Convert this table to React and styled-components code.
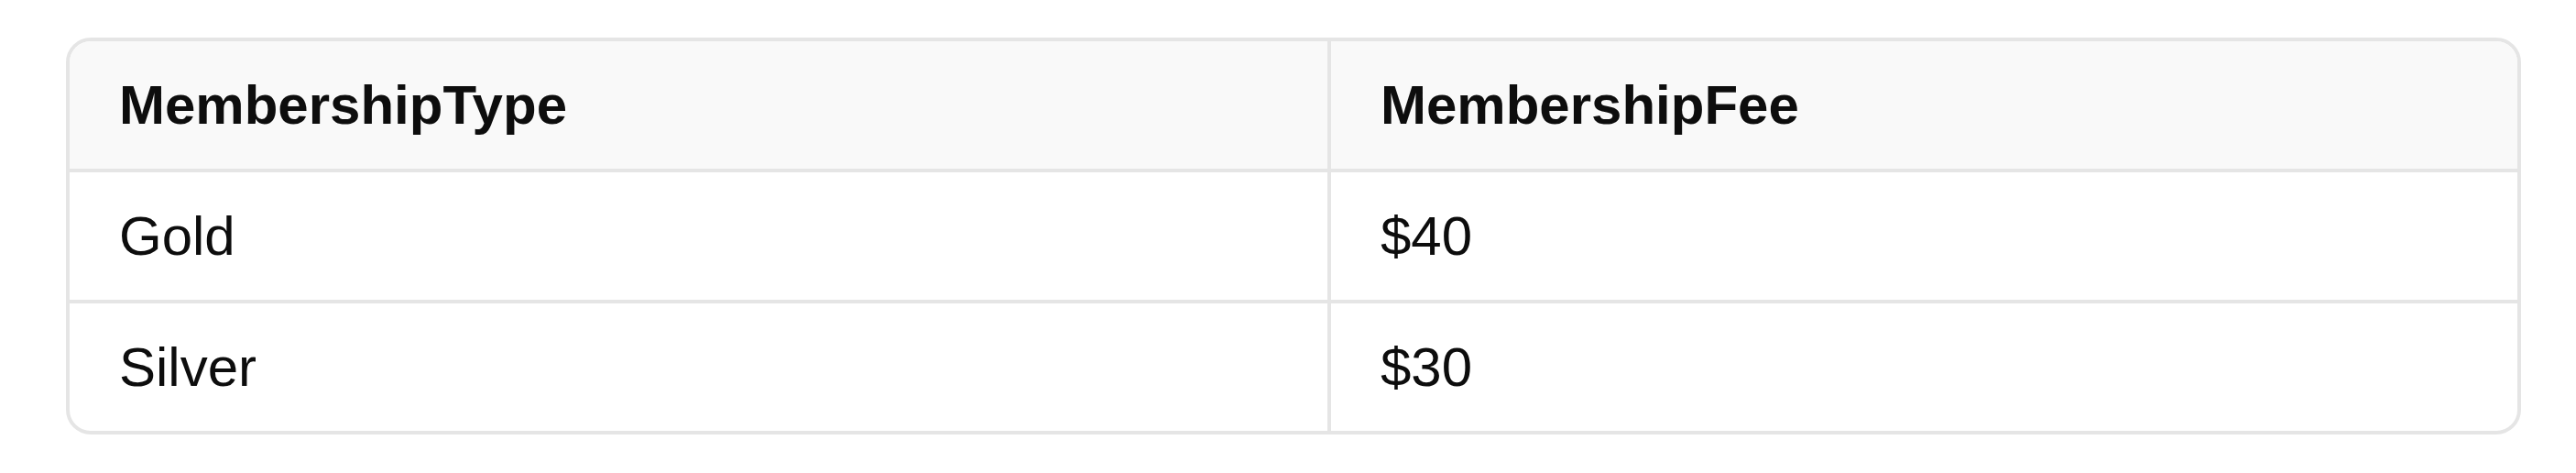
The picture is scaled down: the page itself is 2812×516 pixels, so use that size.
import React from 'react';
import styled, { createGlobalStyle } from 'styled-components';

const GlobalStyle = createGlobalStyle`
  html, body {
    margin: 0;
    padding: 0;
    background: #ffffff;
  }
  body {
    font-family: "Liberation Sans", Arial, sans-serif;
    color: #0d0d0d;
  }
`;

const Page = styled.div`
  padding: 41px 60px 0 72px;
`;

const Frame = styled.div`
  border: 4px solid #e5e5e5;
  border-radius: 27px;
  overflow: hidden;
`;

const Table = styled.table`
  width: 100%;
  border-collapse: separate;
  border-spacing: 0;
  table-layout: fixed;
  font-size: 60px;
  line-height: 1;
`;

const Col = styled.col`
  width: ${p => p.width};
`;

const HeadCell = styled.th`
  height: 139px;
  padding: 0 54px;
  text-align: left;
  font-weight: 700;
  background: #f9f9f9;
  border-bottom: 4px solid #e5e5e5;
  border-left: ${p => (p.first ? 'none' : '4px solid #e5e5e5')};
  vertical-align: middle;
`;

const Cell = styled.td`
  height: 139px;
  padding: 0 54px;
  font-weight: 400;
  border-bottom: ${p => (p.last ? 'none' : '4px solid #e5e5e5')};
  border-left: ${p => (p.first ? 'none' : '4px solid #e5e5e5')};
  vertical-align: middle;
`;

const rows = [
  { type: 'Gold', fee: '$40' },
  { type: 'Silver', fee: '$30' },
];

export default function App() {
  return (
    <>
      <GlobalStyle />
      <Page>
        <Frame>
          <Table>
            <colgroup>
              <Col width="1373px" />
              <Col />
            </colgroup>
            <thead>
              <tr>
                <HeadCell first>MembershipType</HeadCell>
                <HeadCell>MembershipFee</HeadCell>
              </tr>
            </thead>
            <tbody>
              {rows.map((r, i) => (
                <tr key={r.type}>
                  <Cell first last={i === rows.length - 1}>{r.type}</Cell>
                  <Cell last={i === rows.length - 1}>{r.fee}</Cell>
                </tr>
              ))}
            </tbody>
          </Table>
        </Frame>
      </Page>
    </>
  );
}
